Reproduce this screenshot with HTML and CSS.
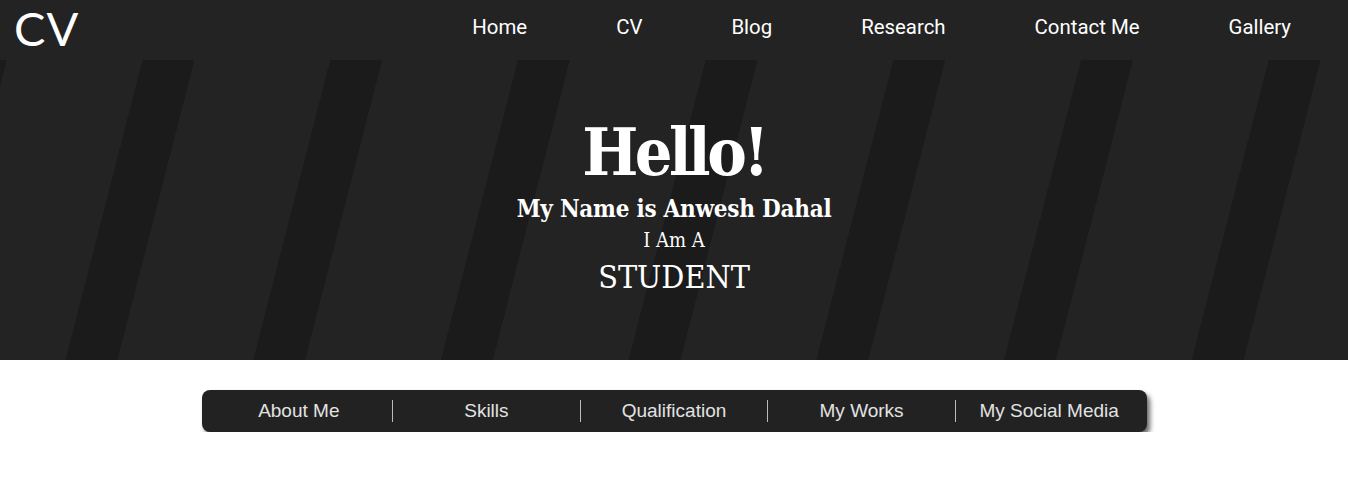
FILE: index.html
```html
<!DOCTYPE html>
<html lang="en">
<head>
<meta charset="utf-8">
<title>CV</title>
<link rel="stylesheet" href="styles.css">
</head>
<body>
<header class="topbar">
  <div class="logo">CV</div>
  <nav class="mainnav">
    <a href="#">Home</a>
    <a href="#">CV</a>
    <a href="#">Blog</a>
    <a href="#">Research</a>
    <a href="#">Contact Me</a>
    <a href="#">Gallery</a>
  </nav>
</header>
<section class="hero">
  <h1 class="hello">Hello!</h1>
  <p class="name">My Name is Anwesh Dahal</p>
  <p class="iam">I Am A</p>
  <p class="role">STUDENT</p>
</section>
<div class="subwrap">
  <nav class="subnav">
    <a href="#">About Me</a>
    <a href="#">Skills</a>
    <a href="#">Qualification</a>
    <a href="#">My Works</a>
    <a href="#">My Social Media</a>
  </nav>
</div>
</body>
</html>
```
FILE: styles.css
```css
* { box-sizing: border-box; }
html, body { margin: 0; padding: 0; background: #fff; }
body { font-family: "Liberation Sans", Arial, sans-serif; }

.topbar {
  height: 60px;
  background: #232323;
  display: flex;
  align-items: center;
  justify-content: space-between;
  padding: 0 57px 0 14px;
}
.logo {
  font-family: Lato, "Noto Sans", sans-serif;
  font-size: 47px;
  color: #fff;
  line-height: 1;
  letter-spacing: 1px;
  margin-top: -4px;
}
.mainnav {
  display: flex;
  gap: 89px;
  margin-top: -6px;
}
.mainnav a {
  font-family: Roboto, sans-serif;
  font-size: 20.4px;
  color: #fff;
  text-decoration: none;
}

.hero {
  height: 300px;
  background-color: #232323;
  background-image: repeating-linear-gradient(104.4deg,
    #1b1b1b 0 6.6px, #232323 6.6px 138px, #1b1b1b 138px 181.8px);
  color: #fff;
  display: flex;
  flex-direction: column;
  align-items: center;
  justify-content: center;
  font-family: "DejaVu Serif", serif;
  font-stretch: condensed;
  padding-bottom: 4px;
}
.hero p, .hero h1 { margin: 0; }
.hello {
  font-size: 66px;
  font-weight: bold;
  line-height: 72px;
  letter-spacing: -3.5px;
  margin-bottom: 4px !important;
}
.name {
  font-size: 24px;
  font-weight: bold;
  line-height: 34px;
  letter-spacing: -0.25px;
}
.iam {
  font-size: 20px;
  line-height: 28px;
}
.role {
  font-size: 32px;
  line-height: 46px;
  font-weight: 500;
}

.subwrap {
  padding-top: 30px;
  display: flex;
  justify-content: center;
}
.subnav {
  width: 945px;
  height: 42px;
  background: #222;
  border-radius: 8px;
  box-shadow: 3px 4px 5px rgba(0, 0, 0, 0.6);
  display: flex;
  align-items: center;
  padding: 0 4px;
}
.subnav a {
  flex: 1;
  text-align: center;
  color: #e2e2e2;
  text-decoration: none;
  font-size: 19px;
  line-height: 22px;
}
.subnav a + a {
  border-left: 1px solid #bbb;
}
```
